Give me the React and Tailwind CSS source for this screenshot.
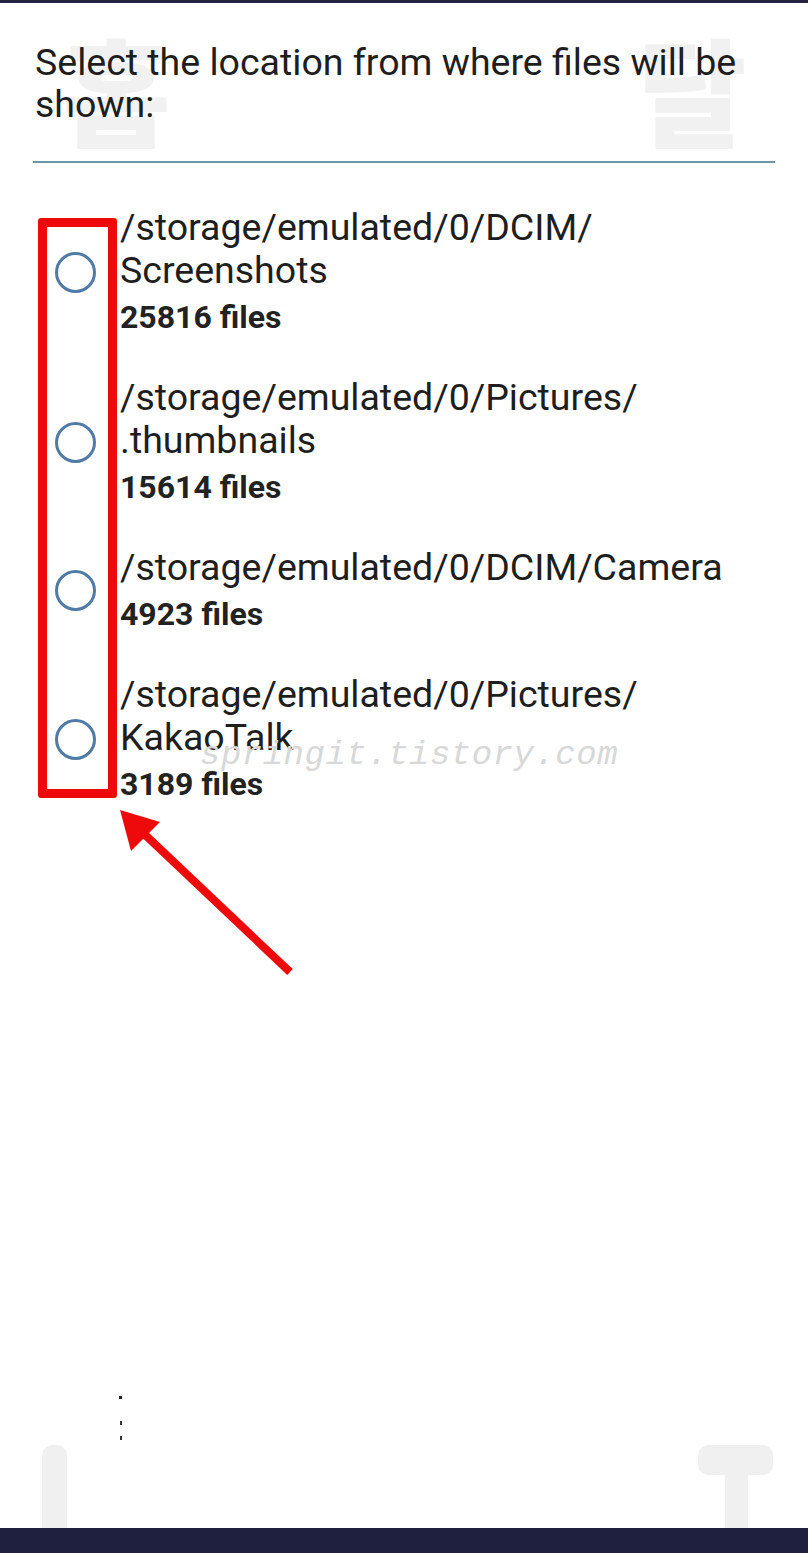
const folders = [
  { lines: ["/storage/emulated/0/DCIM/", "Screenshots"], count: "25816 files" },
  { lines: ["/storage/emulated/0/Pictures/", ".thumbnails"], count: "15614 files" },
  { lines: ["/storage/emulated/0/DCIM/Camera"], count: "4923 files" },
  { lines: ["/storage/emulated/0/Pictures/", "KakaoTalk"], count: "3189 files" },
];

export default function App() {
  return (
    <div className="relative flex min-h-[1553px] w-[808px] flex-col overflow-hidden bg-white font-['Roboto','Liberation_Sans',sans-serif] text-[#1e1e1e]">
      {/* faint background marks */}
      <span className="absolute left-[62px] top-[18px] font-['Noto_Sans_CJK_KR',sans-serif] text-[118px] font-black leading-[140px] text-[#f1f1f1]">홈</span>
      <span className="absolute left-[638px] top-[18px] font-['Noto_Sans_CJK_KR',sans-serif] text-[118px] font-black leading-[140px] text-[#f1f1f1]">달</span>
      <div className="absolute left-[42px] top-[1445px] h-[85px] w-[25px] rounded-t-[10px] bg-[#f0f0f0]" />
      <div className="absolute left-[698px] top-[1445px] h-[30px] w-[75px] rounded-[10px] bg-[#f0f0f0]" />
      <div className="absolute left-[725px] top-[1470px] h-[60px] w-[23px] bg-[#f0f0f0]" />

      <div className="relative h-[3px] bg-[#25233f]" />

      <div className="relative px-[35px] pt-[38px] text-[37.5px] leading-[42px]">
        Select the location from where files will be shown:
      </div>

      <div className="relative mx-[33px] mt-[36px] h-[2px] bg-[#6b98a8]" />

      <div className="relative mt-[43px] flex flex-col gap-[38px]">
        {folders.map((f) => (
          <div key={f.count} className="flex items-center">
            <div className="w-[120px] shrink-0 pl-[55px]">
              <div className="h-[41px] w-[41px] rounded-full border-[3px] border-[#4f7ba6]" />
            </div>
            <div className="flex flex-col">
              {f.lines.map((l) => (
                <span key={l} className="text-[37.5px] leading-[43px]">{l}</span>
              ))}
              <span className="pt-[4px] text-[32px] font-bold leading-[42px] text-[#222]">{f.count}</span>
            </div>
          </div>
        ))}
      </div>

      <span className="absolute left-[200px] top-[730px] font-['Liberation_Mono',monospace] text-[34px] italic tracking-[0.5px] text-[#d8d8d8]">
        springit.tistory.com
      </span>

      {/* highlight box */}
      <div className="absolute left-[38px] top-[218px] h-[580px] w-[79px] rounded-[3px] border-[9px] border-[#ee0a0a]" />

      <svg className="absolute left-0 top-0" width="808" height="1553" viewBox="0 0 808 1553">
        <line x1="290" y1="972" x2="140" y2="830" stroke="#ee0a0a" strokeWidth="8" />
        <polygon points="120,810 160,822 131,851" fill="#ee0a0a" />
      </svg>

      <div className="absolute left-[119px] top-[1396px] h-[3px] w-[3px] bg-[#222]" />
      <div className="absolute left-[120px] top-[1421px] h-[4px] w-[2px] bg-[#333]" />
      <div className="absolute left-[120px] top-[1436px] h-[4px] w-[2px] bg-[#333]" />

      <div className="flex-1" />
      <div className="relative h-[25px] bg-[#1f1f3f]" />
    </div>
  );
}
